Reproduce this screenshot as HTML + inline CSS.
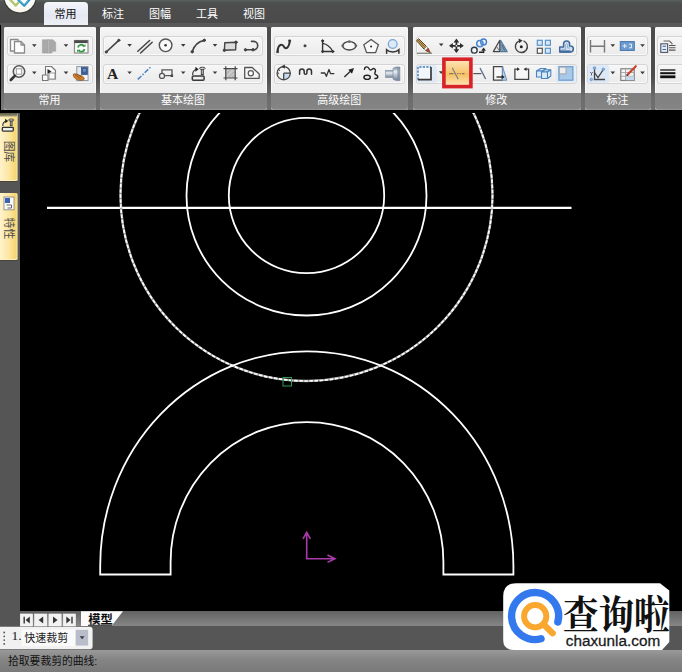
<!DOCTYPE html>
<html><head><meta charset="utf-8"><title>CAD</title>
<style>
html,body{margin:0;padding:0;}
body{width:682px;height:672px;overflow:hidden;background:#000;position:relative;font-family:"Liberation Sans","Noto Sans CJK SC",sans-serif;}
.abs{position:absolute;}
#topbar{left:0;top:0;width:682px;height:27px;background:linear-gradient(#58615e 0,#4b4f4e 3px,#4c4d4c 8px,#4a4a4a 23px,#5a5a5a 23.500px,#595959 27px);}
#ribbon{left:0;top:27px;width:682px;height:82.600px;background:linear-gradient(#4c4c4c,#4e4e4e 60%,#6c6c6c 85%,#707070);}
.tab{top:2px;height:23px;font-size:11px;line-height:24px;color:#fff;text-align:center;width:44px;}
.tab.on{background:linear-gradient(#f4f6fa,#e4e8f2 60%,#eef0f4);color:#111;border-radius:4px 4px 0 0;}
.panel{top:26.700px;height:82.900px;background:linear-gradient(#f7f7f7,#efefef 10px,#eeeeee);border-radius:2px 2px 3px 3px;overflow:hidden;box-shadow:inset 1px 0 0 #f8f8f8,inset -1px 0 0 #f8f8f8;}
.panel .lab{position:absolute;left:0;right:0;top:66.200px;height:16.700px;background:linear-gradient(#808080,#848484 90%,#999);color:#fff;font-size:11px;line-height:15px;text-align:center;text-indent:-1px;}
.grp{height:18px;border:1px solid #d4d4d4;border-radius:3px;background:linear-gradient(#f6f6f6,#ebebeb);box-shadow:inset 0 0 0 1px #f9f9f9;}
#side{left:0;top:113.200px;width:19.800px;height:514px;background:#555;}
.stab{left:0;width:18.300px;background:linear-gradient(90deg,#fff3cc,#fbe59c 55%,#f6d46e 90%,#fdf0c0 95%,#6a5c3c);border-bottom:1px solid #fbf0c4;border-radius:0 2px 2px 0;box-sizing:border-box;box-shadow:0 1px 0 #4a4232;}
.vt{position:absolute;left:2px;width:14px;font-size:11px;color:#333;writing-mode:vertical-rl;line-height:14px;}
#canvas{left:0;top:110px;width:682px;height:501px;background:#000;}
#tabbar{left:20px;top:611px;width:662px;height:15px;background:linear-gradient(#626262,#868686);}
#cmdbar{left:0;top:626px;width:682px;height:24px;background:#565656;}
#status{left:0;top:649.500px;width:682px;height:23px;background:linear-gradient(#9a9a9a,#858585 40%,#787878);color:#111;font-size:10.800px;line-height:23px;}
</style></head><body>
<div id="topbar" class="abs"></div>
<div id="ribbon" class="abs"></div>
<div class="abs tab on" style="left:43.500px;">常用</div>
<div class="abs tab" style="left:91px;">标注</div>
<div class="abs tab" style="left:138px;">图幅</div>
<div class="abs tab" style="left:185px;">工具</div>
<div class="abs tab" style="left:232px;">视图</div>

<div class="abs panel" style="left:3.700px;width:92.800px;"><div class="lab">常用</div></div>
<div class="abs panel" style="left:99.800px;width:167.600px;"><div class="lab">基本绘图</div></div>
<div class="abs panel" style="left:271px;width:137.400px;"><div class="lab">高级绘图</div></div>
<div class="abs panel" style="left:412.500px;width:168.500px;"><div class="lab">修改</div></div>
<div class="abs panel" style="left:584.700px;width:66.500px;"><div class="lab">标注</div></div>
<div class="abs panel" style="left:654.800px;width:40px;"><div class="lab"></div></div>

<div class="abs grp" style="left:7px;top:36px;width:84px;"></div>
<div class="abs grp" style="left:7px;top:64px;width:84px;"></div>
<div class="abs grp" style="left:103px;top:36px;width:158.300px;"></div>
<div class="abs grp" style="left:103px;top:64px;width:158.300px;"></div>
<div class="abs grp" style="left:274px;top:36px;width:129px;"></div>
<div class="abs grp" style="left:274px;top:64px;width:129px;"></div>
<div class="abs grp" style="left:415.600px;top:36px;width:159.500px;"></div>
<div class="abs grp" style="left:415.600px;top:64px;width:159.500px;"></div>
<div class="abs grp" style="left:587px;top:36px;width:59px;"></div>
<div class="abs grp" style="left:587px;top:64px;width:59px;"></div>
<div class="abs grp" style="left:657px;top:36px;width:40px;"></div>
<div class="abs grp" style="left:657px;top:64px;width:40px;"></div>

<div id="canvas" class="abs"></div>
<div class="abs" style="left:0;top:24.500px;width:1.300px;height:88px;background:#000;"></div>
<div class="abs" style="left:1.300px;top:24.500px;width:2.500px;height:85px;background:linear-gradient(#5e5e5e,#6a6a6a 70%,#7c7c7c);"></div>
<div id="side" class="abs"></div>
<div class="abs stab" style="top:113.200px;height:68px;"><div style="position:absolute;left:0;right:1px;top:0;height:4px;background:linear-gradient(#5e5c48,#8a8462 60%,#e8dcae);"></div></div>
<div class="abs stab" style="top:193px;height:67px;"></div>
<div id="tabbar" class="abs"></div>
<div id="cmdbar" class="abs"></div>
<div id="status" class="abs"><span style="margin-left:8px;">拾取要裁剪的曲线:</span></div>

<svg class="abs" style="left:0;top:0;" width="682" height="672" viewBox="0 0 682 672">
<!-- ===== ICONS ===== -->
<defs>
<path id="dd" d="M-2.3,-1.2 H2.3 L0,1.5 Z" fill="#3a3a3a"/>
<linearGradient id="og" x1="0" y1="0" x2="0" y2="1"><stop offset="0" stop-color="#fde6bc"/><stop offset="0.45" stop-color="#f9c877"/><stop offset="0.55" stop-color="#f8c064"/><stop offset="1" stop-color="#fde7bd"/></linearGradient>
<linearGradient id="cyl" x1="0" y1="0" x2="0" y2="1"><stop offset="0" stop-color="#7f8fa4"/><stop offset="0.35" stop-color="#e8eef4"/><stop offset="1" stop-color="#6f7f94"/></linearGradient>
<radialGradient id="lg" cx="0.5" cy="0.55" r="0.6"><stop offset="0" stop-color="#ffffff"/><stop offset="0.8" stop-color="#f8f8f4"/><stop offset="1" stop-color="#dcdcd8"/></radialGradient>
</defs>
<!-- app logo -->
<circle cx="20" cy="-3" r="16.600" fill="#353836"/>
<circle cx="20" cy="-3.300" r="15.700" fill="url(#lg)"/>
<path d="M8.500,-2 L15.800,5.600 L19,1.800" fill="none" stroke="#a9bf62" stroke-width="2.300" stroke-linejoin="round" opacity="0.9"/>
<path d="M17.500,-1 L24.200,5.800 L30,-1" fill="none" stroke="#2f93c6" stroke-width="2.300" stroke-linejoin="round"/>
<path d="M19.500,0.500 L24.200,4.300 L28,0.500" fill="none" stroke="#7fd8e8" stroke-width="0.900" opacity="0.8"/>
<ellipse cx="20" cy="10" rx="6" ry="2" fill="#fde8d0" opacity="0.350"/>

<!-- tints -->
<rect x="588" y="65" width="21" height="18" rx="2" fill="#d6e6f8" opacity="0.75"/>
<rect x="417" y="65" width="20" height="18" rx="2" fill="#d6e6f8" opacity="0.6"/>
<rect x="555.500" y="65" width="21" height="18" rx="2" fill="#d6e6f8" opacity="0.5"/>
<!-- dropdown arrows -->
<use href="#dd" x="34.300" y="45.400"/><use href="#dd" x="66" y="45.400"/><use href="#dd" x="34.300" y="72.800"/><use href="#dd" x="66" y="72.800"/>
<use href="#dd" x="129.600" y="45.300"/><use href="#dd" x="183.200" y="45.300"/><use href="#dd" x="215" y="45.300"/>
<use href="#dd" x="129.600" y="72.600"/><use href="#dd" x="183.200" y="72.600"/><use href="#dd" x="215" y="72.600"/>
<use href="#dd" x="441.200" y="44.800"/><use href="#dd" x="441.200" y="72.500"/>
<use href="#dd" x="612.800" y="45.500"/><use href="#dd" x="642.500" y="45.500"/><use href="#dd" x="612.800" y="72.800"/><use href="#dd" x="642.500" y="72.800"/>

<!-- panel1 row1 -->
<g fill="#fdfdfd" stroke="#8a8a8a" stroke-width="1.3" stroke-linejoin="round">
<path d="M10.500,39.500 H18 V51 H10.500 Z"/>
<path d="M14.500,41.500 H21 L24.500,45 V53 H14.500 Z"/>
<path d="M21,41.500 V45 H24.500" fill="none"/>
</g>
<g fill="#a9a9a9" stroke="#a0a0a0" stroke-width="0.600">
<path d="M42.400,39.800 H48.500 V53 H42.400 Z"/>
<path d="M47.600,39.800 H53 L55.700,42.300 V51.200 H52 V53 H47.600 Z"/>
<path d="M48.300,40 V52.800" stroke="#c4c4c4" stroke-width="0.700"/>
</g>
<rect x="74.500" y="40.500" width="13.500" height="12.500" fill="#fff" stroke="#8c8c8c" stroke-width="1.2"/>
<rect x="74.300" y="40.300" width="13.400" height="2.800" fill="#4a4a4a"/>
<path d="M78,47.500 A3.200,3.200 0 0 1 84,46.500 M84.500,49 A3.200,3.200 0 0 1 78.500,50" fill="none" stroke="#3d9a4c" stroke-width="1.8"/>
<path d="M82.500,46.800 H85.500 V44 Z M80,49.800 H77 V52.300 Z" fill="#3d9a4c"/>
<!-- panel1 row2 -->
<circle cx="19" cy="71.500" r="5.700" fill="#fbfbfb" stroke="#555" stroke-width="1.600"/>
<rect x="16.300" y="68.800" width="5.400" height="5.400" fill="#fff" stroke="#999" stroke-width="1"/>
<path d="M14.800,75.800 L10.800,80" stroke="#333" stroke-width="2.600" stroke-linecap="round"/>
<g fill="#fafafa" stroke="#777" stroke-width="1.100" stroke-linejoin="round">
<path d="M45.500,66.500 H51.500 L55.500,70.500 V79 H45.500 Z"/>
<path d="M42.500,75 H48 V80.500 H42.500 Z"/>
<path d="M49,73 H55 V79 H49 Z" stroke="#999"/>
</g>
<path d="M47.500,69 V74 L51.500,71.500 Z" fill="#222"/>
<rect x="76.800" y="66.600" width="11.200" height="14" fill="#e4e8ee" stroke="#8a94a4" stroke-width="1"/>
<rect x="81.500" y="67.600" width="5.800" height="6.800" fill="#3c5f98" stroke="#2c4a7c" stroke-width="0.700"/>
<rect x="83" y="69" width="3" height="2.600" fill="#6f8fc4"/>
<rect x="82" y="75.500" width="5.300" height="4.300" fill="#f8f8f8"/>
<path d="M73.300,74.200 C75,72.800 77,74.800 79.500,75.200 C82,75.600 84,76.800 84.300,78.500 C84.500,80 82,80.800 79.500,80.300 C77,79.800 74.500,78.500 73.500,76.500 Z" fill="#cf8030" stroke="#8a5018" stroke-width="0.700"/>
<path d="M75,74.800 L80.500,78.500 M76.500,73.800 L81.500,77" stroke="#7a4418" stroke-width="0.700"/>
<!-- panel2 row1 -->
<g stroke="#444" fill="none" stroke-linecap="round">
<path d="M106.200,52 L118.800,40.300" stroke-width="1.700"/>
<circle cx="106.200" cy="52" r="1.100" fill="#444"/><circle cx="118.800" cy="40.300" r="1.100" fill="#444"/>
<path d="M137.800,51.300 L149.600,40.500 M140.600,53 L152.200,42.200" stroke-width="1.500"/>
<circle cx="165.600" cy="45.300" r="6.300" stroke-width="1.400" stroke="#555" fill="#f8f8f8"/>
<circle cx="165.600" cy="45.300" r="1.300" fill="#333" stroke="none"/>
<path d="M192.200,51.800 C194,45.500 198,41.500 204.300,40.300" stroke-width="1.700"/>
<circle cx="192.200" cy="51.800" r="1.200" fill="#444"/><circle cx="204.300" cy="40.300" r="1.200" fill="#444"/>
<path d="M224.800,42.800 L236,42.200 L235.600,49.800 L224.400,50.300 Z" stroke-width="1.400" fill="#dcdcdc"/>
<circle cx="236" cy="42.200" r="1.200" fill="#444"/><circle cx="224.400" cy="50.300" r="1.200" fill="#444"/>
<path d="M245.500,49.800 H253.500 A4.200,4.200 0 0 0 253.500,41.400 H251.500" stroke-width="1.600"/>
<circle cx="245.500" cy="49.800" r="1.200" fill="#444"/><circle cx="253" cy="49.800" r="1.200" fill="#444"/>
</g>
<!-- panel2 row2 -->
<text x="112.600" y="78.600" font-family="'Liberation Serif',serif" font-weight="bold" font-size="15.500" text-anchor="middle" fill="#222">A</text>
<path d="M137.800,79.400 L151.500,66.200" stroke="#4d82c4" stroke-width="1.500" stroke-dasharray="5 1.500 1.500 1.500" fill="none"/>
<g stroke="#555" fill="none" stroke-width="1.300">
<path d="M162,75.300 V69.800 H172 V75.600 H164.500" />
<circle cx="162" cy="75.900" r="2.500" fill="#f4f4f4"/>
<rect x="170.700" y="74.600" width="2.400" height="2.400" fill="#444" stroke="none"/>
</g>
<g stroke="#3a3a3a" fill="none" stroke-width="1.300">
<rect x="192.300" y="76.100" width="11.800" height="4.200" rx="1" fill="#e4e4e4" stroke-width="1.500"/>
<path d="M194.300,78.200 H201" stroke="#fff" stroke-width="1.200" stroke-dasharray="1.600 0.700"/>
<path d="M192.700,75 A5.600,5.600 0 0 1 196.300,69.300" stroke-width="1.200"/>
<path d="M195.400,66.700 L198.600,69.200 L195.400,71.700 Z" fill="#222" stroke="none"/>
<rect x="201.300" y="69.300" width="2" height="5.300" fill="#bdbdbd" stroke-width="0.900"/>
<ellipse cx="202.300" cy="68.300" rx="2.800" ry="1.100" fill="#eee" stroke-width="1"/>
</g>
<rect x="225.800" y="68.600" width="9.400" height="9.400" fill="#c9c9c9"/>
<path d="M225.800,66.300 V80.300 M235.200,66.300 V80.300 M223.500,68.600 H237.500 M223.500,78 H237.500" stroke="#444" stroke-width="1.200" fill="none"/>
<path d="M228,78 L235.200,70.500 M225.800,75 L231.500,68.600 M231.500,78 L235.200,74" stroke="#999" stroke-width="0.700"/>
<path d="M244.700,67.500 H252.200 L259.200,74 V78.300 H244.700 Z" fill="#f6f6f6" stroke="#555" stroke-width="1.300" stroke-linejoin="round"/>
<circle cx="250.800" cy="73.300" r="2.600" fill="#fff" stroke="#555" stroke-width="1.200"/>

<!-- panel3 row1 -->
<g stroke="#333" fill="none" stroke-linecap="round">
<path d="M277.600,51.500 C278,43.500 282.500,43.800 284,46.800 C285.500,49.800 289.300,48 289.700,40.800" stroke-width="2"/>
<path d="M276.600,52.600 L278.700,52.600 L277.900,49.500 Z M288.600,40 L290.800,40 L289.900,43 Z" fill="#333" stroke-width="0.600"/>
<circle cx="305" cy="45.700" r="1.500" fill="#444" stroke="none"/>
<path d="M322.600,40.800 V51.500 H332.800" stroke-width="1.400"/>
<path d="M322.600,43.300 C327,44 330.500,47 332.600,51.300" stroke-width="1.300"/>
<circle cx="322.600" cy="40.800" r="1" fill="#333"/><circle cx="332.800" cy="51.500" r="1" fill="#333"/><circle cx="322.600" cy="51.500" r="1" fill="#333"/>
<ellipse cx="349.300" cy="45.800" rx="6.600" ry="4.200" stroke-width="1.300" stroke="#444" fill="#f6f6f6"/>
<circle cx="342.700" cy="45.800" r="1.400" fill="#666" stroke="none"/><circle cx="355.900" cy="45.800" r="1.400" fill="#666" stroke="none"/><circle cx="349.300" cy="41.600" r="1.400" fill="#666" stroke="none"/>
<path d="M371.100,39.500 L378.400,44.700 L375.600,52.600 H366.600 L363.800,44.700 Z" stroke-width="1.300" stroke="#555" fill="#f8f8f8" stroke-linejoin="round"/>
<circle cx="371.100" cy="46.500" r="1.100" fill="#333" stroke="none"/>
<circle cx="392.700" cy="44" r="4.400" stroke="#7aa6d6" stroke-width="1.300" fill="#dce9f6"/>
<path d="M386.600,53.200 V49.800 C389.500,52.800 396,52.800 398.900,49.800 V53.200" stroke-width="1.500" stroke="#333"/>
</g>
<!-- panel3 row2 -->
<path d="M283.700,73.200 H290.300 A6.600,6.600 0 0 1 283.700,79.800 Z" fill="#c6dcf2"/>
<g stroke="#444" fill="none">
<circle cx="283.700" cy="73.200" r="6.600" stroke-width="1.300"/>
<path d="M283.700,73.200 H290.500 M283.700,73.200 V80" stroke-width="1.300"/>
<path d="M284.800,64.600 L281.200,66.600 L284.800,68.800 Z" fill="#333" stroke="none"/>
<path d="M278.200,68.500 L279.700,71 M277.500,72 L279,74" stroke-width="0.900"/>
<path d="M299.600,74.200 V71.400 A2.300,2.300 0 0 1 304.200,71.400 V73 A1.350,1.350 0 0 0 306.900,73 V71.400 A2.300,2.300 0 0 1 311.500,71.400 V74.200" stroke-width="1.500" stroke="#333" stroke-linecap="round"/>
<path d="M320.800,73 H324.800 L326.400,76.300 L329,69.500 L330.500,73.600 H334.300" stroke-width="1.300" stroke="#333" stroke-linejoin="round"/>
<path d="M344.300,77 L351,70.800" stroke-width="1.500" stroke="#333"/>
<path d="M354,68 L348.300,69.700 L352,73.700 Z" fill="#222" stroke="none"/>
<path d="M364.400,69.400 C364.600,67 366.500,66.300 367.800,67.300 C369.500,68.600 369.300,70.400 370.800,70 C372,69.700 372.800,68.200 374.200,68.600 C376,69.200 375.600,71.500 374.800,73 C374,74.600 376.500,74.800 377.500,76 C378.500,77.300 377.300,78.800 375,78.500" stroke-width="1.400" stroke="#222" stroke-linecap="round"/>
<ellipse cx="367.100" cy="77.300" rx="3.200" ry="2.100" stroke-width="1.400" stroke="#222"/>
</g>
<rect x="385.300" y="70.300" width="8" height="7.300" fill="url(#cyl)" stroke="#8a96a8" stroke-width="0.600"/>
<path d="M393,68.200 L396,67 H399.800 V80.600 H396 L393,79.200 Z" fill="url(#cyl)" stroke="#7a8698" stroke-width="0.600"/>
<rect x="397.300" y="67" width="2.500" height="13.600" fill="#7c8aa0" opacity="0.700"/>

<!-- panel4 row1 -->
<path d="M416.500,40.700 L418.700,38.700 L426.500,46.500 L424,49 Z" fill="#cfa95a" stroke="#54421e" stroke-width="1"/>
<path d="M417.700,39.800 L425.300,47.700" stroke="#6e5224" stroke-width="1"/>
<path d="M424,49 L426.500,46.500 L428.200,48.200 L425.700,50.700 Z" fill="#f2eee6" stroke="#777" stroke-width="0.600"/>
<path d="M425.700,50.700 L428.200,48.200 L430.600,52.900 Z" fill="#a8452a" stroke="#6a2a18" stroke-width="0.600"/>
<path d="M417,53.300 H432" stroke="#7f8c78" stroke-width="1.300"/>
<g stroke="#2e2e2e" stroke-width="1.700" fill="#2e2e2e">
<path d="M450.500,45.800 H462.300 M456.400,40 V51.600" fill="none"/>
<path d="M456.400,38.600 L459.200,42.400 H453.600 Z M456.400,53 L459.200,49.200 H453.600 Z M449,45.800 L452.800,43 V48.600 Z M463.800,45.800 L460,43 V48.600 Z" stroke="none"/>
</g>
<circle cx="456.400" cy="45.800" r="1.100" fill="#fff" stroke="#2e2e2e" stroke-width="0.600"/>
<circle cx="483.600" cy="41.900" r="2.900" fill="none" stroke="#3f7fcc" stroke-width="1.400"/>
<circle cx="479.900" cy="43.600" r="3.200" fill="none" stroke="#4a88d2" stroke-width="1.500"/>
<circle cx="474.300" cy="50.200" r="2.900" fill="#f6f6f6" stroke="#2f3a4a" stroke-width="1.400"/>
<path d="M479,52.300 H483.600 V50.500" fill="none" stroke="#222" stroke-width="1.400"/>
<path d="M483.600,47.400 L485.900,50.700 H481.300 Z" fill="#222"/>
<path d="M499.800,40.300 L493.300,51.600 H499.800 Z" fill="#e4e4e4" stroke="#444" stroke-width="1.200" stroke-linejoin="round"/>
<path d="M500.600,40.300 L507.200,51.600 H500.600 Z" fill="#7f9fbe" stroke="#56789a" stroke-width="1.100" stroke-linejoin="round"/>
<path d="M497,47 L499,50.500 M502,45 L504.500,50.500" stroke="#444" stroke-width="0.700"/>
<path d="M523.500,40.900 A6,6 0 1 1 518.800,41.100" fill="none" stroke="#444" stroke-width="1.400"/>
<path d="M518.500,38.600 L522.600,40.600 L519.200,43.200 Z" fill="#333"/>
<circle cx="521.300" cy="46.800" r="1.500" fill="#222"/>
<g stroke-width="1.200">
<rect x="537.300" y="40.300" width="5" height="5" fill="#d8e8f6" stroke="#5a96cc"/>
<rect x="545.400" y="40.300" width="5" height="5" fill="#d8e8f6" stroke="#5a96cc"/>
<rect x="537.300" y="48.300" width="5" height="5" fill="#fafafa" stroke="#555"/>
<rect x="545.400" y="48.300" width="5" height="5" fill="#d8e8f6" stroke="#5a96cc"/>
</g>
<path d="M559.700,52 V47 H563.600 V44 A3,3 0 0 1 569.600,44 V46 H570.300 A3,3 0 0 1 570.300,52 Z" fill="#d4e3f2" stroke="#41699a" stroke-width="1.500" stroke-linejoin="round"/>
<path d="M559.700,51.500 H570.500" fill="none" stroke="#41699a" stroke-width="2.200"/>
<path d="M561.500,49.300 H565.600 V44.300 A1.200,1.200 0 0 1 567.600,44.300 V48 H570 " fill="none" stroke="#86acd4" stroke-width="0.900"/>
<!-- panel4 row2 -->
<rect x="418" y="67" width="13" height="12.700" fill="#f2f7fc"/>
<path d="M418,79.700 V67 H431" fill="none" stroke="#4a7ebc" stroke-width="1.500" stroke-dasharray="2.200 1.300"/>
<path d="M431,67 V79.700 H418" fill="none" stroke="#3a3a3a" stroke-width="1.700"/>
<rect x="443.900" y="59.200" width="27" height="27.400" fill="url(#og)" stroke="#d8222a" stroke-width="3.600"/>
<path d="M449,73.600 H464.500" stroke="#8a7a5a" stroke-width="1.100" stroke-dasharray="4.500 1.200 1.200 1.200 1.200 1.200 1.200 1.200" fill="none"/>
<path d="M452.200,67.800 L458.200,79.200" stroke="#7a8290" stroke-width="1.200"/>
<path d="M473.300,73.600 H481.300" stroke="#555" stroke-width="1.200"/>
<path d="M480,68 L485.600,79" stroke="#5a6a88" stroke-width="1.300"/>
<path d="M493.500,66.600 H502.500 V80.200 H493.500 Z" fill="#f8f8f8" stroke="#444" stroke-width="1.300"/>
<path d="M502.500,66.600 L506.800,80.200 H502.500 Z" fill="#b8d0e8" stroke="#6a92be" stroke-width="1"/>
<path d="M496.500,77 H503" stroke="#222" stroke-width="1.300"/>
<path d="M504.800,77 L501.600,74.900 V79.100 Z" fill="#222"/>
<path d="M519,69.200 H514.900 V79.300 H528.600 V69.200 H524.500" fill="#f6f6f6" stroke="#444" stroke-width="1.300"/>
<path d="M517,67.300 L519.800,69.200 L517,71.100 Z M526.500,67.300 L523.700,69.200 L526.500,71.100 Z" fill="#333"/>
<g fill="#dceaf6" stroke="#4a84c0" stroke-width="1.100" stroke-linejoin="round">
<path d="M536.500,71 L540.500,68.500 H546 L542.500,71 Z"/>
<path d="M536.500,71 H542.500 V77 H536.500 Z"/>
<path d="M541.500,72 L545,69.800 H550.500 L547,72 Z"/>
<path d="M541.500,72 H547.500 V78.500 H541.500 Z"/>
<path d="M547.500,72 L550.800,69.800 V76 L547.500,78.500 Z"/>
</g>
<rect x="558.900" y="66.700" width="14" height="13.500" fill="#a9c9e8" stroke="#6a9ccc" stroke-width="1.200"/>
<rect x="559.300" y="67.100" width="6.800" height="6.800" fill="#ececec" stroke="#9aa4b0" stroke-width="1"/>

<!-- panel5 -->
<path d="M590.500,40 V52.600 M604.500,40 V52.600 M590.500,46.200 H604.500" stroke="#777" stroke-width="1.400" fill="none"/>
<rect x="620.300" y="41.600" width="14" height="8.800" fill="#6d9bd0" stroke="#4474ac" stroke-width="1"/>
<path d="M622.500,46 H627 M624.700,44 V48 M629,44.200 H631.500 V47.800 H629" stroke="#e6eef8" stroke-width="1" fill="none"/>
<g stroke="#444" fill="none" stroke-width="1.300">
<path d="M594.500,68.500 V79.500 H605"/>
<path d="M594.500,72.500 L598,77.500 L603,70"/>
<circle cx="594.500" cy="68" r="1.300" fill="#8ab0dc" stroke="#5a8ac0" stroke-width="0.600"/><circle cx="603.300" cy="69.300" r="1.300" fill="#8ab0dc" stroke="#5a8ac0" stroke-width="0.600"/><circle cx="591.300" cy="79.500" r="1.300" fill="#8ab0dc" stroke="#5a8ac0" stroke-width="0.600"/>
<path d="M590.200,72 L591.500,73.500 L592.800,72 M591.500,73.500 V75.500" stroke-width="0.800"/>
</g>
<rect x="620.800" y="68.800" width="13.400" height="11.600" fill="#f4f4f4" stroke="#777" stroke-width="1.100"/>
<path d="M620.800,72.500 H634.200 M620.800,76.300 H634.200 M625.500,68.800 V80.400" stroke="#9a9a9a" stroke-width="0.800"/>
<rect x="626" y="76.500" width="8" height="3.700" fill="#c4d8ee"/>
<path d="M627.500,74.800 L635.800,66.200" stroke="#c8442c" stroke-width="2.200" stroke-linecap="round"/>
<path d="M626.300,76 L628.500,75.600 L627,74 Z" fill="#333"/>
<!-- panel6 -->
<g stroke="#666" fill="none" stroke-width="1.100">
<path d="M663.500,41 H669.500 L672,43.500 V44.500"/>
<rect x="660.800" y="43.800" width="6.800" height="8.600" fill="#e6eef6" stroke="#556"/>
<path d="M662.500,46.300 H666 M662.500,49.500 H666" stroke="#3a6aa8"/>
<path d="M669,45.500 H675.500 M669,47.800 H675.500 M669,50.100 H675.500" stroke="#555"/>
</g>
<path d="M660.200,70 H675.400" stroke="#111" stroke-width="1.300"/>
<path d="M660.200,73.200 H675.400" stroke="#111" stroke-width="2"/>
<path d="M660.200,76.800 H675.400" stroke="#111" stroke-width="2.800"/>

<!-- drawing -->
<g fill="none" stroke="#fff" stroke-width="1.800">
<clipPath id="cv"><rect x="20" y="113" width="662" height="499"/></clipPath>
<g clip-path="url(#cv)">
<line x1="47" y1="207.900" x2="571.500" y2="207.900" stroke-width="2.200"/>
<circle cx="306.5" cy="195.5" r="77.7"/>
<circle cx="306.5" cy="195.5" r="120"/>
<circle cx="306.5" cy="195" r="186" stroke="#9c9c9c" stroke-width="2.400"/><circle cx="306.5" cy="195" r="186" stroke-dasharray="3.500 1.600" stroke-width="1.700"/>
<path d="M100.2,574.5 V566 A206.6,214.7 0 0 1 513.4,566 V574.5 H443.4 V562 A136.4,139.900 0 0 0 170.6,562 V574.5 Z"/>
</g>
<rect x="283" y="377.5" width="8.5" height="8.5" stroke="#2f9a55" stroke-width="1"/>
<path d="M306.700,532.300 V558.700 H335 M303,538.800 L306.700,532.300 L310.400,538.800 M327.500,555 L335,558.700 L327.500,562.400" stroke="#aa3aaa" stroke-width="1.600"/>
</g>


<!-- side tab contents -->
<g stroke="#333" fill="none">
<rect x="2.300" y="127.300" width="11" height="3.800" rx="0.800" fill="#e8e8e8" stroke-width="1.300"/>
<path d="M4,129.200 H11.500" stroke="#fff" stroke-width="1" stroke-dasharray="1.500 0.700"/>
<path d="M2.800,126 A5,5 0 0 1 6,121" stroke-width="1.100"/>
<path d="M5.200,118.700 L8.200,121 L5.200,123.300 Z" fill="#222" stroke="none"/>
<rect x="10.300" y="121" width="1.800" height="4.800" fill="#bbb" stroke-width="0.800"/>
<ellipse cx="11.200" cy="120" rx="2.600" ry="1" fill="#eee" stroke-width="0.900"/>
</g>
<text transform="translate(4.800,140.800) rotate(90)" font-family="'Liberation Sans','Noto Sans CJK SC',sans-serif" font-size="10.800" fill="#4a4a4a">图库</text>
<rect x="4" y="197" width="10" height="12.800" fill="#fbfbfb" stroke="#8c8c8c" stroke-width="0.900"/>
<rect x="5" y="198" width="5" height="5" fill="#3b62b0"/>
<path d="M6.500,205 H11.500 V208 H7.500" fill="none" stroke="#555" stroke-width="0.900"/>
<text transform="translate(4.800,217.600) rotate(90)" font-family="'Liberation Sans','Noto Sans CJK SC',sans-serif" font-size="10.800" fill="#4a4a4a">特性</text>
<!-- bottom bars -->
<g>
<rect x="20.300" y="614" width="12.300" height="12" fill="#f1f1f1" stroke="#fafafa" stroke-width="0.600"/>
<rect x="34.600" y="614" width="12.300" height="12" fill="#f1f1f1" stroke="#fafafa" stroke-width="0.600"/>
<rect x="48.900" y="614" width="12.300" height="12" fill="#f1f1f1" stroke="#fafafa" stroke-width="0.600"/>
<rect x="63.200" y="614" width="12.300" height="12" fill="#f1f1f1" stroke="#fafafa" stroke-width="0.600"/>
<path d="M24.200,616.800 V623.400" stroke="#333" stroke-width="1.400"/><path d="M29.800,616.600 V623.600 L25.600,620.100 Z" fill="#333"/>
<path d="M43.200,616.600 V623.600 L38.600,620.100 Z" fill="#333"/>
<path d="M53,616.600 V623.600 L57.600,620.100 Z" fill="#333"/>
<path d="M66.300,616.600 V623.600 L70.500,620.100 Z" fill="#333"/><path d="M72,616.800 V623.400" stroke="#333" stroke-width="1.400"/>
<path d="M81,611.300 H123 L111.500,626 H81 Z" fill="#fbfbfb"/>
<text x="100.500" y="623.800" font-family="'Liberation Sans','Noto Sans CJK SC',sans-serif" font-weight="700" font-size="12.300" text-anchor="middle" fill="#111">模型</text>
<path d="M88,625.300 H112" stroke="#222" stroke-width="1"/>
</g>
<!-- command toolbar -->
<rect x="-3" y="626.800" width="95.600" height="22.500" rx="3" fill="#f1f1f1"/>
<rect x="21.500" y="629.500" width="67" height="16.500" fill="#fafafa"/>
<g fill="#555"><circle cx="4.200" cy="632.500" r="0.900"/><circle cx="4.200" cy="636.300" r="0.900"/><circle cx="4.200" cy="640.100" r="0.900"/><circle cx="4.200" cy="643.900" r="0.900"/></g>
<text x="11.600" y="640" font-family="'Liberation Serif',serif" font-size="13.500" fill="#222">1.</text>
<text x="24.300" y="642.300" font-family="'Liberation Sans','Noto Sans CJK SC',sans-serif" font-size="11" fill="#222">快速裁剪</text>
<rect x="75.600" y="629.800" width="12.600" height="15.800" fill="#b9bdc9"/>
<path d="M79.600,636.300 H84.600 L82.100,639.300 Z" fill="#3a3a44"/>
<!-- watermark -->
<path d="M516,583.200 H660 L669.300,590.500 V642 L662,650 H514 Q503.200,650 503.200,640 V596 Q503.200,583.200 516,583.200 Z" fill="#fff"/>
<path d="M 557.84,621.97 A 23.5,23.5 0 1 0 541.02,638.79" fill="none" stroke="#3478ee" stroke-width="7.400" stroke-linecap="round"/>
<circle cx="535.200" cy="616.200" r="11.150" fill="none" stroke="#f9a72e" stroke-width="5.900"/>
<path d="M543.500,624.300 L552.600,633.200" stroke="#f9a72e" stroke-width="6.400" stroke-linecap="round"/>
<text transform="translate(616.300,628.800) scale(1,1.13)" x="0" y="0" font-family="'Liberation Serif','Noto Serif CJK SC',serif" font-weight="700" font-size="35.500" text-anchor="middle" fill="#111">查询啦</text>
<text x="613" y="645.700" font-family="'Liberation Sans',sans-serif" font-size="15.300" text-anchor="middle" fill="#1a1a1a" stroke="#1a1a1a" stroke-width="0.300">chaxunla.com</text>
</svg>
</body></html>
